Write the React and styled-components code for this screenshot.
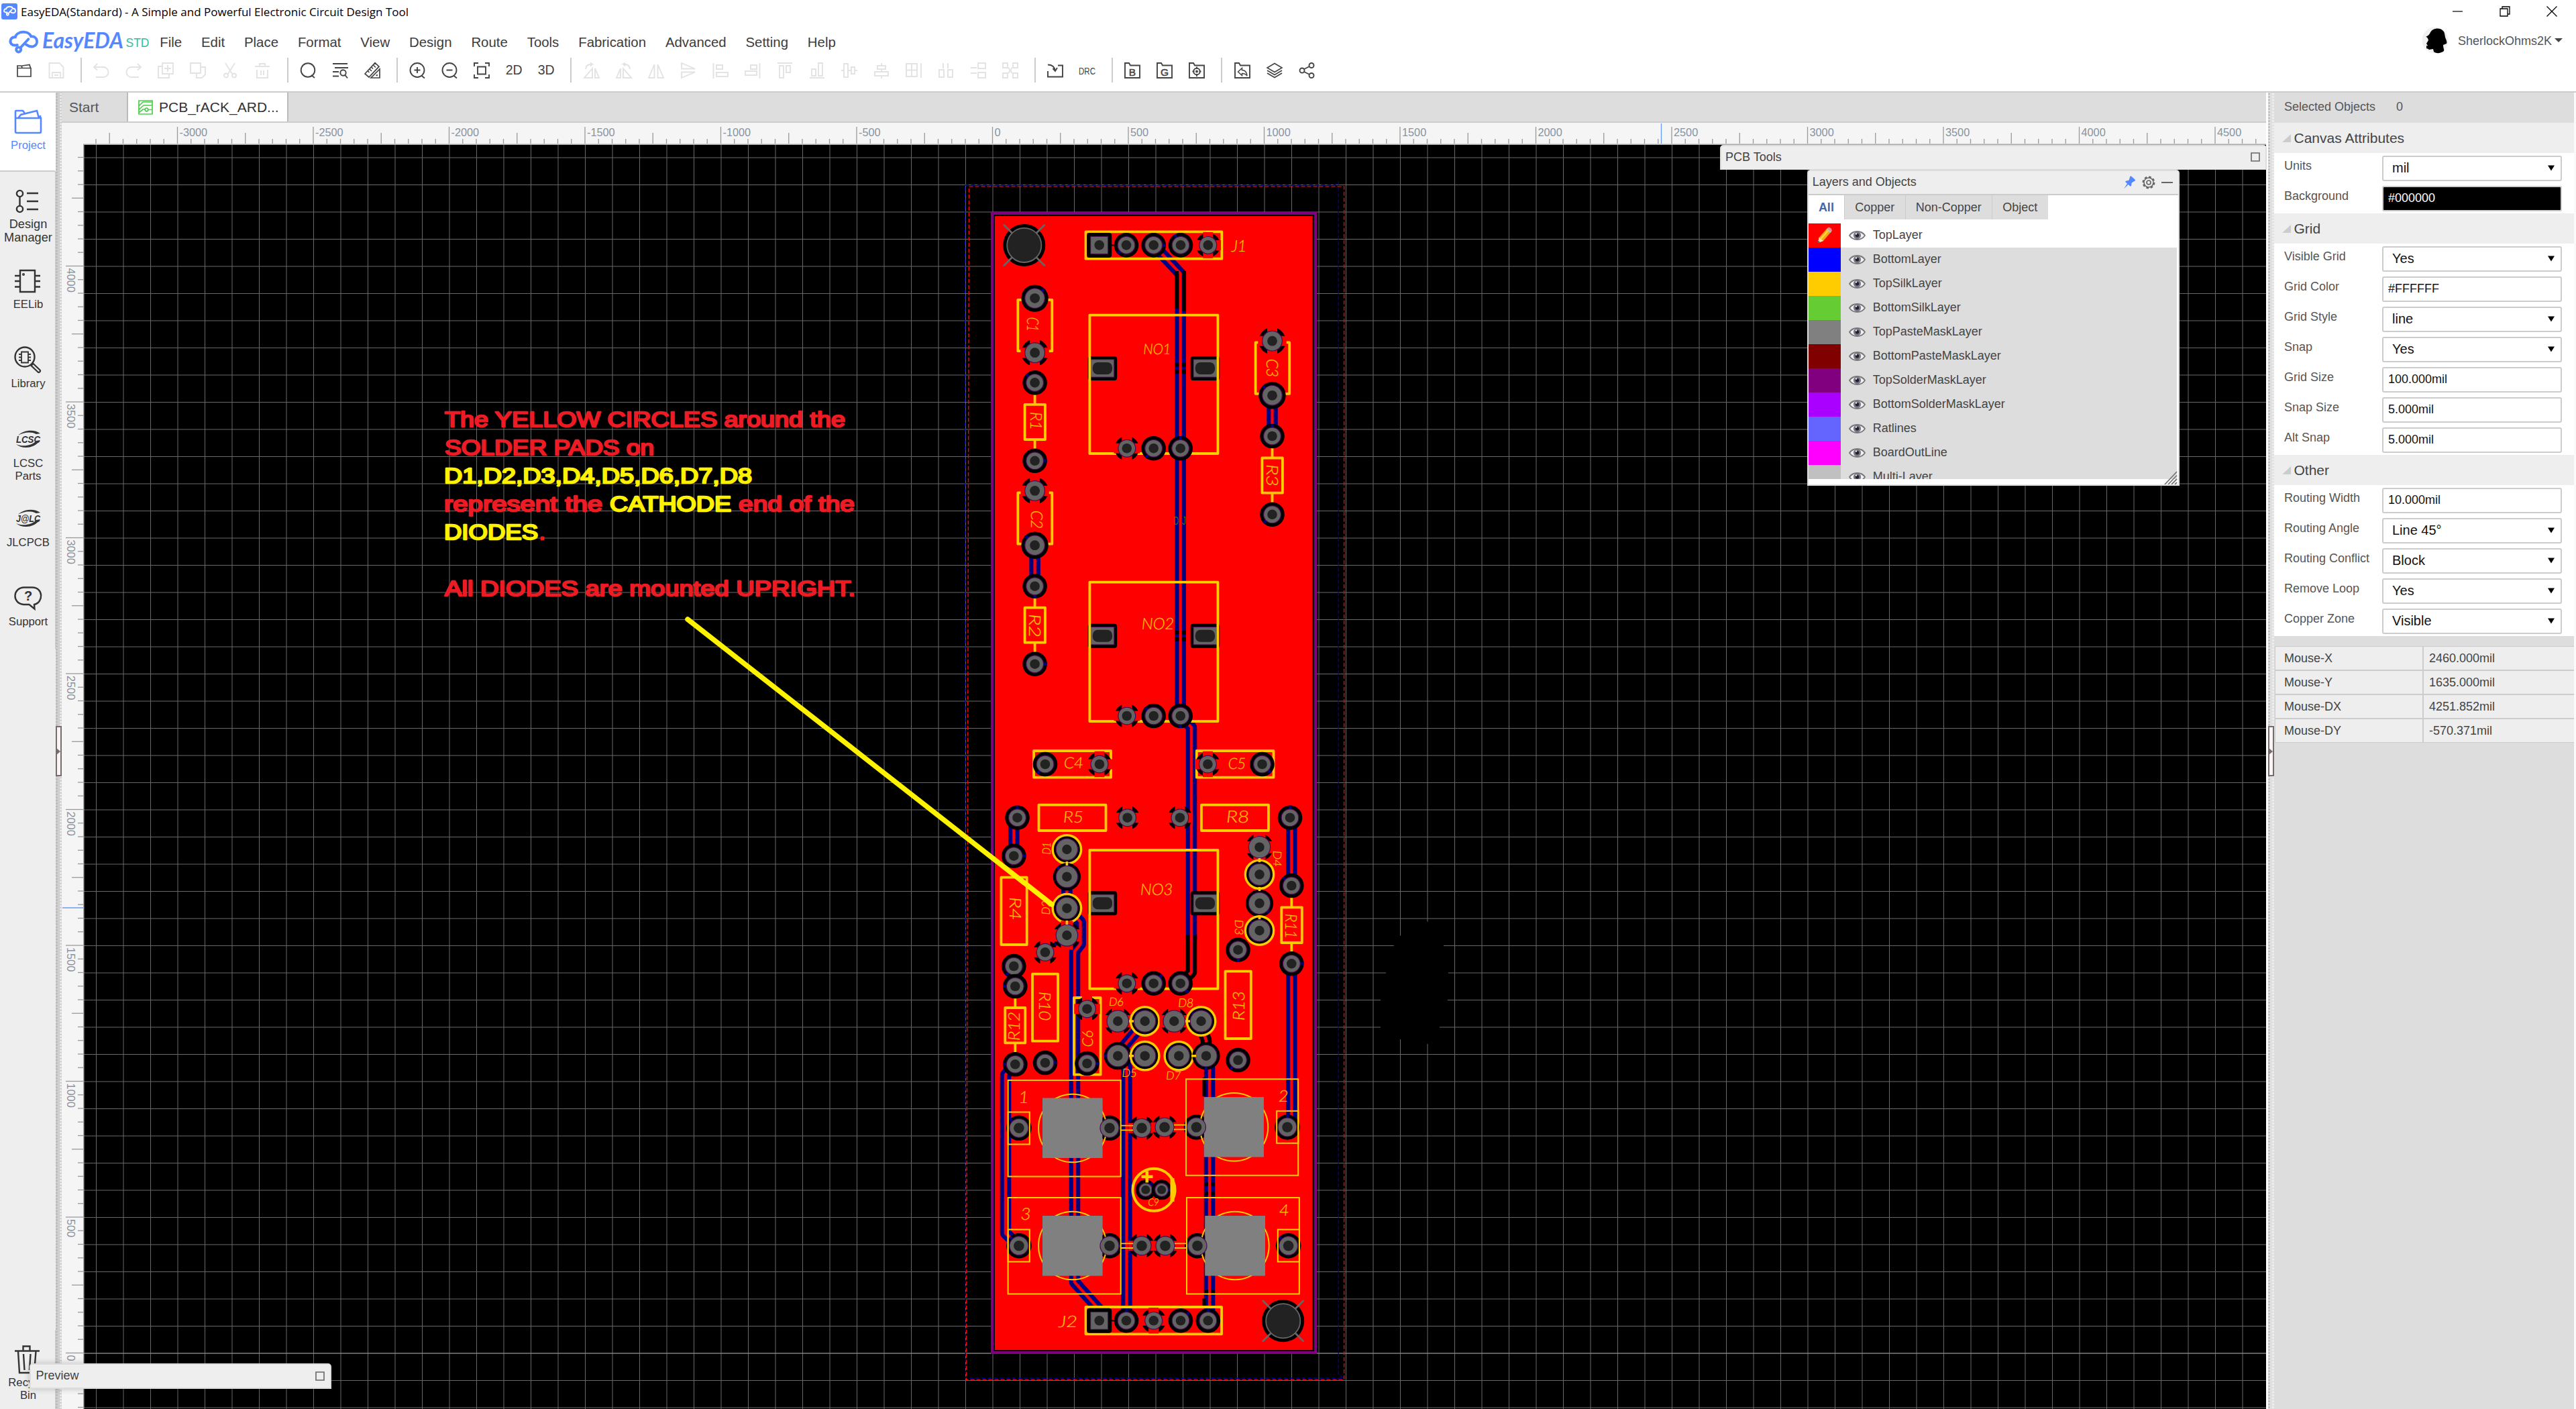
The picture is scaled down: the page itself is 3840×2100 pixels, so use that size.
import React from "react";
import styled, { createGlobalStyle, css } from "styled-components";

const Global = createGlobalStyle`
  * { box-sizing: border-box; }
  html, body { margin: 0; padding: 0; background: #fff; }
  body { font-family: "Liberation Sans", Arial, sans-serif; color: #444; overflow: hidden; }
`;

/* ---------- shell ---------- */
const App_ = styled.div`
  position: relative;
  width: 3840px;
  height: 2100px;
  display: flex;
  flex-direction: column;
  background: #fff;
  overflow: hidden;
`;
const TitleBar = styled.div`
  height: 34px;
  display: flex;
  align-items: center;
  padding-left: 2px;
  color: #000;
`;
const AppTitle = styled.span`
  margin-left: 5px;
  font-family: "Open Sans", "Noto Sans", sans-serif;
  font-size: 17px;
  letter-spacing: 0.01px;
  white-space: pre;
`;
const WindowButtons = styled.div`
  margin-left: auto;
  height: 34px;
  display: flex;
  align-items: center;
  gap: 54px;
  padding-right: 28px;
  svg { display: block; }
`;
const MenuBar = styled.div`
  height: 48px;
  padding-top: 9px;
  display: flex;
  align-items: center;
`;
const LogoSlot = styled.div`
  width: 223.8px;
  height: 39px;
  flex: none;
  svg { display: block; overflow: visible; }
`;
const MenuItem = styled.span`
  padding: 2px 14.45px 0;
  font-size: 20.4px;
  color: #3c3c3c;
`;
const User = styled.div`
  margin-left: auto;
  margin-top: -5px;
  padding-right: 20px;
  display: flex;
  align-items: center;
  font-size: 18px;
  color: #555;
  svg { display: block; }
`;
const UserName = styled.span`
  margin: 3px 4px 0 14px;
`;
const ToolBar = styled.div`
  height: 56px;
  padding: 0 0 9px 12px;
  display: flex;
  align-items: center;
  border-bottom: 2px solid #ccc;
`;
const ToolCell = styled.div`
  width: 48px;
  height: 36px;
  flex: none;
  display: flex;
  align-items: center;
  justify-content: center;
  color: ${(p) => (p.$off ? "#e3e3e3" : "#444")};
  font-size: 19.5px;
  svg { display: block; overflow: visible; }
`;
const ToolSep = styled.div`
  width: 2px;
  height: 37px;
  flex: none;
  margin: 0 5.2px 0 12.2px;
  background: #ccc;
`;
const Body = styled.div`
  flex: 1;
  min-height: 0;
  display: flex;
`;

/* ---------- left side ---------- */
const SideNav = styled.div`
  width: 83px;
  flex: none;
  background: #eee;
  display: flex;
  flex-direction: column;
`;
const NavItem = styled.div`
  height: 118.4px;
  padding: 22px 0 0 2px;
  display: flex;
  flex-direction: column;
  align-items: center;
  text-align: center;
  font-size: ${(p) => p.$fs || 16.7}px;
  line-height: 19.8px;
  color: #333;
  border-right: 1px solid #ccc;
  ${(p) => p.$bottom && css`margin-top: auto;`}
  ${(p) => p.$active && css`
    background: #fff;
    color: #5588ff;
    border-right-color: #fff;
    border-bottom: 2px solid #ccc;
  `}
`;
const NavIcon = styled.div`
  width: 44px;
  height: 44px;
  margin-bottom: 3px;
  svg { display: block; overflow: visible; }
`;
const Splitter = styled.div`
  width: 9px;
  flex: none;
  margin-left: ${(p) => p.$gap || 0}px;
  padding-top: 944px;
  background-color: ${(p) => p.$bg || "#cfcfcf"};
  background-image: radial-gradient(circle at 1.5px 2px, #b4b4b4 1px, transparent 1.4px),
    radial-gradient(circle at 7.5px 2px, #f4f4f4 1px, transparent 1.4px);
  background-size: 9px 4.5px;
`;
const Handle = styled.div`
  height: 75px;
  background: #f7f5f5;
  border: 2px solid #7a6b6b;
  display: flex;
  align-items: center;
  svg { display: block; }
`;

/* ---------- editor ---------- */
const Editor = styled.div`
  width: 3286px;
  flex: none;
  display: flex;
  flex-direction: column;
`;
const TabStrip = styled.div`
  height: 45px;
  flex: none;
  display: flex;
  background: #ddd;
  border-bottom: 2px solid #ccc;
  font-size: 21px;
`;
const StartTab = styled.div`
  width: 97px;
  padding: 1px 0 0 11px;
  display: flex;
  align-items: center;
  color: #555;
`;
const ActiveTab = styled.div`
  width: 241px;
  padding: 1px 0 0 15px;
  display: flex;
  align-items: center;
  gap: 9px;
  background: #fff;
  border: solid #bbb;
  border-width: 0 2px;
  color: #333;
`;
const Stage = styled.div`
  flex: 1;
  min-height: 0;
  svg { display: block; }
`;

/* ---------- floating windows ---------- */
const Floating = styled.div`
  position: absolute;
  left: ${(p) => p.$x}px;
  top: ${(p) => p.$y}px;
  width: ${(p) => p.$w}px;
  height: ${(p) => p.$h}px;
  display: flex;
  flex-direction: column;
  background: ${(p) => p.$bg || "#eee"};
  border: 2px solid #ddd;
  border-radius: 5px 5px 0 0;
  box-shadow: ${(p) => (p.$shadow ? "0 0 10px rgba(0,0,0,.22)" : "none")};
`;
const FloatHead = styled.div`
  height: 34px;
  flex: none;
  padding: 0 8px 1px ${(p) => p.$pad || 6}px;
  display: flex;
  align-items: center;
  background: #eee;
  font-size: 18px;
  color: #444;
  svg { display: block; }
`;
const HeadTools = styled.div`
  margin-left: auto;
  display: flex;
  align-items: center;
  gap: 9px;
`;
const LayerTabs = styled.div`
  height: 38px;
  flex: none;
  display: flex;
  border-top: 2px solid #ccc;
`;
const LayerTab = styled.div`
  padding: 0 15.2px;
  display: flex;
  align-items: center;
  font-size: 18px;
  color: #444;
  background: #ddd;
  border-right: 1.5px solid ${(p) => (p.$last ? "#ddd" : "#ccc")};
  ${(p) => p.$on && css`background: #fff; color: #4169aa; font-weight: bold;`}
`;
const LayerList = styled.div`
  height: 381px;
  margin-top: 6px;
  width: 549px;
  overflow: hidden;
`;
const LayerRow = styled.div`
  height: 36px;
  display: flex;
  align-items: center;
  background: ${(p) => (p.$on ? "#fff" : "#ddd")};
  color: #444;
  font-size: 18px;
`;
const Swatch = styled.div`
  width: 48px;
  height: 36px;
  display: flex;
  align-items: center;
  justify-content: center;
  background: ${(p) => p.$c};
`;
const EyeBox = styled.div`
  margin: 0 11px 1px 12px;
  svg { display: block; }
`;
const LayerName = styled.span`
  padding-bottom: 1px;
`;
const Grip = styled.div`
  position: absolute;
  right: 1px;
  bottom: 0;
  svg { display: block; }
`;

/* ---------- properties ---------- */
const Props = styled.div`
  width: 447px;
  flex: none;
  background: #ddd;
  display: flex;
  flex-direction: column;
`;
const Selected = styled.div`
  height: 45px;
  padding: 0 0 1.5px 15px;
  display: flex;
  align-items: center;
  gap: 31px;
  font-size: 18px;
  color: #555;
`;
const Section = styled.div`
  height: 45px;
  padding-left: 11.5px;
  display: flex;
  align-items: center;
  gap: 5px;
  background: #eee;
  font-size: 21px;
  color: #444;
`;
const Field = styled.div`
  height: 45px;
  padding: 4px 0 0 15px;
  display: flex;
  background: #fff;
`;
const FieldLabel = styled.div`
  width: 146px;
  font-size: 18px;
  line-height: 31px;
  color: #555;
`;
const Input = styled.div`
  width: 268px;
  height: 38px;
  padding: 0 9px ${(p) => (p.$select ? 1 : 2)}px ${(p) => (p.$select ? 13 : 7)}px;
  display: flex;
  align-items: center;
  justify-content: space-between;
  border: 2px solid #ccc;
  border-radius: 3px;
  font-size: ${(p) => (p.$select ? 20 : 18)}px;
  color: ${(p) => (p.$dark ? "#fff" : "#111")};
  background: ${(p) => (p.$dark ? "#000" : "#fff")};
  svg { display: block; }
`;
const MouseTable = styled.div`
  margin-top: 15px;
  padding-left: 1px;
  font-size: 18px;
  color: #444;
`;
const MouseRow = styled.div`
  height: 36px;
  display: flex;
  line-height: 35px;
  background: #eee;
  border: solid #ccc;
  border-width: 1px 0 1px 1px;
`;
const MouseKey = styled.div`
  width: 221px;
  padding-left: 13px;
  border-right: 2px solid #ccc;
`;
const MouseValue = styled.div`
  padding-left: 8px;
`;
const Edge = styled.div`
  flex: 1;
  background: #fafafa;
`;

/* ---------- toolbar icons ---------- */
const I = ({ children, s = 24, w = 1.9 }) => (
  <svg width={s} height={s} viewBox="0 0 24 24" fill="none" stroke="currentColor" strokeWidth={w}>{children}</svg>
);
const P = ({ d, ...r }) => <I {...r}><path d={d} /></I>;
const boxFolder = "M1 23V1h6l2 3.5h14V23z";
const Letter = ({ c }) => (
  <I><path d={boxFolder} /><text x="12" y="19.5" fontSize="15.5" textAnchor="middle" fill="currentColor" strokeWidth=".5" fontFamily="Liberation Sans, sans-serif">{c}</text></I>
);
const Drc = () => (
  <svg width="25" height="14" viewBox="0 0 25 14">
    <text x="0" y="12.500" fontSize="15.500" fill="currentColor" textLength="25" lengthAdjust="spacingAndGlyphs" fontFamily="Liberation Sans, sans-serif">DRC</text>
  </svg>
);

const tools = [
  [<P d="M2 8.500h20V21H2zM2 8.500V5h6l1 3M9 5l11-1.500 1.500 5" w={1.7} />],
  [<P d="M1.500 1h15l6 6v16h-21zM6 23v-8h12v8M9 19h6" />, 1],
  0,
  [<P d="M6 2 1 7l5 4.500M1 7h14a7.500 7.500 0 0 1 0 15H4" />, 1],
  [<P d="m18 2 5 5-5 4.500M23 7H9a7.500 7.500 0 0 0 0 15h11" />, 1],
  [<P d="M7 1h16v16H7zM7 6H1v17h16v-6M15 4v10M10 9h10" />, 1],
  [<P d="M1 1h15v15H1zM16 7h7v11l-5 5h-8v-7" />, 1],
  [<P d="m5 1 10 16M19 1 9 17M9 19.500a3 3 0 1 1-6 0 3 3 0 0 1 6 0zM21 19.500a3 3 0 1 1-6 0 3 3 0 0 1 6 0z" />, 1],
  [<P d="M1 6h22M8 6V2h8v4M4 11v12h16V11M10 12v7M14 12v7" />, 1],
  0,
  [<I><circle cx="12" cy="11.500" r="10.300" /><path d="m17 19 5 4" /></I>],
  [<I><path d="M1 2h22M4 8h20M1 14h9M1 20.500h9" /><circle cx="16.500" cy="15.500" r="4.200" /><path d="m19.500 19 3.500 4.500" /></I>],
  [<I w={1.7}><path d="M1 17 16 .8l6 5.400L7 22zM23 10v13H10zM19 18v1.500h-1.500M5.500 13l2 2M8 10l3 3M11 7.500l2 2M14 4.500l3 3" /></I>],
  0,
  [<I><circle cx="12" cy="11.500" r="10.500" /><path d="m18 19.500 5 4M7.500 11.500h9M12 7v9" /></I>],
  [<I><circle cx="12" cy="11.500" r="10.500" /><path d="m18 19.500 5 4M7.500 11.500h9" /></I>],
  [<P d="M7 1H1v5M17 1h6v5M7 23H1v-5M17 23h6v-5M6 6.500h12v11H6z" />],
  ["2D"],
  ["3D"],
  0,
  [<P d="M13 9v14H1zM17 9v14h6zM3 10C3 5 7 2.500 13 2.500L10 .5M13 2.500l-3 3" />, 1],
  [<P d="M11 9v14h12zM7 9v14H1zM21 10c0-5-4-7.500-10-7.500L14 .5m-3 2 3 3" />, 1],
  [<P d="M9.500 3v20H1zM14.500 3v20H23z" />, 1],
  [<P d="M2 9.500V1l20 8.500zM2 14.500V23l20-8.500z" />, 1],
  [<P d="M1.500 1v23M6 4h9v6H6zM6 15h17v6H6z" />, 1],
  [<P d="M22.500 1v23M9 4h9v6H9zM1 13h17v6H1z" />, 1],
  [<P d="M1 1h22M4 5h6v18H4zM14 5h6v10h-6z" />, 1],
  [<P d="M1 23h22M4 10h6v10H4zM14 1h6v19h-6z" />, 1],
  [<P d="M4 2h6v20H4zM15 7h5v10h-5zM0 12h4M10 12h5M20 12h4" />, 1],
  [<P d="M6 5h12v5H6zM2 14h20v6H2zM12 1v4M12 10v4M12 20v4" />, 1],
  [<P d="M1 2h16v19H1zM1 11.500h16M9 2v19M23 1v22" />, 1],
  [<P d="M2 11h7v11H2zM15 11h7v11h-7zM8 1v8M15 1v8" />, 1],
  [<P d="M12 1h11v8H12zM12 15h11v8H12zM1 8h9M1 16h9" />, 1],
  [<P d="M1 1h7v7H1zM16 1h7v7h-7zM1 16h7v7H1zM16 16h7v7h-7zM9 8c3 2 3 6 0 8M15 8c-3 2-3 6 0 8" />, 1],
  0,
  [<P d="M1 13v8.500h22V4.500h-7M1 3.500c6 0 10 3 11 9M8.500 9l3.500 4 3-5" />],
  [<Drc />],
  0,
  [<Letter c="B" />],
  [<Letter c="G" />],
  [<I><path d={boxFolder} /><circle cx="12" cy="13.500" r="4.800" /><circle cx="12" cy="13.500" r="1" /><path d="M12 6.500v3M12 17.500v3.500M5.500 13.500h3M15.500 13.500h3" /></I>],
  0,
  [<I><path d={boxFolder} /><path d="m5.500 14 6-5.500v3c5 0 7 3.500 7.500 8.500-2-3-4-3.500-7.500-3.500v3z" strokeWidth="1.500" /></I>],
  [<P d="m12 1.500 11 6.500-11 6.500L1 8zM1 12l11 6.500L23 12M1 16l11 6.500L23 16" w={1.6} />],
  [<I><circle cx="19" cy="4.500" r="3.500" /><circle cx="5" cy="12" r="3.500" /><circle cx="19" cy="19.500" r="3.500" /><path d="m8 10 8-4M8 14l8 4" /></I>],
];

/* ---------- side icons ---------- */
const SI = ({ children, w = 2.4 }) => (
  <svg width="44" height="44" viewBox="0 0 44 44" fill="none" stroke="currentColor" strokeWidth={w}>{children}</svg>
);
const Swoosh = ({ t }) => (
  <SI w={0}>
    <path d="M7 15C14 7 31 5 40 12l-6 1C27 9 15 10 7 15zM4 28c8 7 26 8 36-6l-6 1C27 31 13 32 4 28z" fill="#333" />
    <text x="22" y="25.500" textAnchor="middle" fontSize="14.500" fontWeight="bold" fontStyle="italic" fill="#333" textLength="36" lengthAdjust="spacingAndGlyphs" fontFamily="Liberation Sans, sans-serif">{t}</text>
  </SI>
);
const nav = [
  { l: ["Project"], active: 1, i: <SI><path d="M3 16h38v20q0 2-2 2H5q-2 0-2-2zM3 16V6q0-1 1-1h10l3 4M7 16l4-5 24-6 3 11M40 16v-4" strokeWidth="2.600" /></SI> },
  { l: ["Design", "Manager"], fs: 18.2, i: <SI><circle cx="9.500" cy="10.500" r="4.600" /><circle cx="9.500" cy="33.500" r="4.600" /><path d="M9.500 15v14M20 10h17M20 22h17M20 34h17" /></SI> },
  { l: ["EELib"], i: <SI><path d="M10 6h22v32H10zM2 14h8M2 22h8M2 30.500h8M32 14h8M32 22h8M32 30.500h8" /><circle cx="15" cy="12" r=".8" /></SI> },
  { l: ["Library"], i: <SI><circle cx="17" cy="17" r="14.500" /><path d="M12 9.500h10v16H12zM8 13h4M8 17.500h4M8 22h4M22 13h4M22 17.500h4M22 22h4" strokeWidth="1.800" /><path d="m26.500 30 3-3 10 9.500c1.500 2-1 4.500-3 3z" strokeWidth="2.200" /></SI> },
  { l: ["LCSC", "Parts"], i: <Swoosh t="LCSC" /> },
  { l: ["JLCPCB"], i: <Swoosh t="J@LC" /> },
  { l: ["Support"], i: <SI><path d="M16 5.500h12c17 0 17 22.500 3 25.500l.5 6.500-8-6.500h-8C-2 30-2 6 16 5.500z" /><text x="22" y="25" textAnchor="middle" fontSize="20" fontWeight="bold" strokeWidth="0" fill="#333" fontFamily="Liberation Sans, sans-serif">?</text></SI> },
];

/* ---------- small drawings ---------- */
const Cloud = ({ x = 0, y = 0, k = 1, c = "#5588ff", w = 4.6 }) => (
  <g transform={`translate(${x} ${y}) scale(${k})`} fill="none" stroke={c} strokeWidth={w} strokeLinecap="round">
    <path d="M13 22C5 24 1 19 3 14c1-3 4-4 7-4C12 1 30-1 34 9c10-1 12 12 4 15-5 2-9-1-12-3" />
    <path d="m30 13-12 13" /><circle cx="15" cy="29" r="3.600" />
  </g>
);
const Logo = () => (
  <svg width="223" height="39" viewBox="0 43 223 39">
    <Cloud x={13} y={45.500} k={0.98} w={4} />
    <text x="63" y="71.500" fontSize="32" fontWeight="bold" fontStyle="italic" fill="#5588ff" textLength="121" lengthAdjust="spacingAndGlyphs" fontFamily="Lato, Liberation Sans, sans-serif">EasyEDA</text>
    <text x="187.500" y="70" fontSize="17.500" fill="#2fc09a" fontFamily="Liberation Sans, sans-serif">STD</text>
  </svg>
);
const Arrow = () => <svg width="10" height="9" viewBox="0 0 10 9"><path d="M0 .5h10L5 8.500z" fill="#000" /></svg>;
const Eye = () => (
  <svg width="25" height="16" viewBox="0 0 25 16">
    <path d="M1 8C6 0 19 0 24 8 19 16 6 16 1 8z" fill="#f2f2f2" stroke="#777" strokeWidth="1.800" />
    <circle cx="12.500" cy="7.800" r="5.600" fill="#777787" /><circle cx="12.500" cy="7.800" r="2.800" fill="#22222c" /><circle cx="11" cy="5.500" r="1.200" fill="#eee" />
  </svg>
);
const Pencil = () => (
  <svg width="26" height="26" viewBox="0 0 26 26">
    <path d="M3 24 4.500 16 17 2l6 5-12 14z" fill="#f0a818" /><path d="m17 2 2-1.500q4 1 5 5L22.500 8z" fill="#e88a8a" />
    <path d="m15.500 4 6 5 1.500-1.500-6-5z" fill="#bbb" /><path d="M3 24 4.500 16l6.500 5z" fill="#f5e0b8" /><path d="m3 24 .6-3 2.200 1.700z" fill="#333" /><path d="m6 17.500 11-12.500 2 1.700-11 12.500z" fill="#ffd23a" />
  </svg>
);
const MaxBox = () => <svg width="14" height="14" viewBox="0 0 14 14"><path d="M1 1h12v12H1z" fill="none" stroke="#666" strokeWidth="1.600" /></svg>;

/* ---------- board drawing ---------- */
const G = 40.5;
const X0 = 1480;
const Y0 = 2017;
const range = (a, b) => Array.from({ length: b - a + 1 }, (_, i) => a + i);
const SILK = "#ffcc00";

const Grid = () => (
  <g>
    <g stroke="#686868" strokeWidth="1">
      {range(-33, 46).map((n) => <line key={"v" + n} x1={X0 + n * G} x2={X0 + n * G} y1="216" y2="2100" />)}
      {range(-2, 44).map((n) => <line key={"h" + n} y1={Y0 - n * G} y2={Y0 - n * G} x1="125" x2="3378" />)}
      <line x1="125" x2="3378" y1={Y0} y2={Y0} stroke="#8a8a8a" />
    </g>
    <path d="M2087 1395 2112 1370 2124 1370 2140 1385 2152 1409 2159 1450 2158 1490 2146 1531 2129 1556 2087 1549 2058 1532 2058 1490 2066 1450 2078 1409z" fill="#000" />
  </g>
);

const Rulers = () => (
  <g fontFamily="Liberation Sans, sans-serif" fontSize="16.300" fill="#8793a1">
    <rect x="92" y="183" width="3286" height="32.500" fill="#f5f5f5" />
    <rect x="92" y="183" width="33" height="1917" fill="#f5f5f5" />
    <rect x="124" y="214.500" width="3254" height="1.500" fill="#a8a8a8" />
    <rect x="124" y="215" width="1.500" height="1885" fill="#a8a8a8" />
    {range(-66, 93).map((n) => {
      const x = X0 - 0.5 + (n * G) / 2;
      const t = n % 10 === 0 ? 189 : n % 5 === 0 ? 198 : 207;
      return (
        <g key={n}>
          <line x1={x} x2={x} y1={t} y2="214" stroke="#999" strokeWidth="1.300" />
          {n % 10 === 0 && <text x={x + 3} y="202.500">{n * 50}</text>}
        </g>
      );
    })}
    {range(-4, 88).map((n) => {
      const y = Y0 - 0.5 - (n * G) / 2;
      const t = n % 10 === 0 ? 98 : n % 5 === 0 ? 107 : 116;
      return (
        <g key={n}>
          <line y1={y} y2={y} x1={t} x2="124" stroke="#999" strokeWidth="1.300" />
          {n % 10 === 0 && <text transform={`translate(100 ${y + 3}) rotate(90)`}>{n * 50}</text>}
        </g>
      );
    })}
    <path d="M2476.500 184V214M93 1353H124" stroke="#6a9cf0" strokeWidth="1.300" />
  </g>
);

const Track = ({ d, c = "#000082" }) => (
  <g fill="none" strokeLinejoin="round">
    <path d={d} stroke={c} strokeWidth="16.500" />
    <path d={d} stroke="#5a0060" strokeWidth="5.400" />
    <path d={d} stroke="#ff0000" strokeWidth="3.800" />
  </g>
);

const Pad = ({ x, y, k, big = 12.9, out = 18.3, hole = 7.3, a = 225 }) => {
  const rad = (a * Math.PI) / 180;
  const c = Math.cos(rad);
  const s = Math.sin(rad);
  return (
    <g>
      <circle cx={x} cy={y} r={out} fill="#000" />
      {k !== "t" && <line x1={x + c * big} y1={y + s * big} x2={x + c * out * 0.98} y2={y + s * out * 0.98} stroke="#000082" strokeWidth="4" />}
      {k === "t" && <path d={`M${x - out - 1} ${y}H${x + out + 1}M${x} ${y - out - 1}V${y + out + 1}`} stroke="#ff0000" strokeWidth={big > 15 ? 18 : 15} />}
      {k === "y" && <circle cx={x} cy={y} r="21.200" fill="none" stroke={SILK} strokeWidth="3.400" />}
      <circle cx={x} cy={y} r={big} fill="#646464" stroke="#4a0a52" strokeWidth="1.200" />
      <circle cx={x} cy={y} r={hole} fill="#222" />
    </g>
  );
};
const L = { big: 14.8, out: 20.2, hole: 7.4 };
const D = { big: 16.2, out: 20.6, hole: 7.2 };
const B = { big: 14, out: 18.8, hole: 7.8 };
const S = { big: 10, out: 15, hole: 6.5 };

const pads = [
  [1679, 365.4, "r", {}, 135], [1719.7, 365.4, "r", {}, 0], [1760, 365.4, "r", {}, 240], [1800.8, 365.4, "t"],
  [1542.6, 444.6, "r", L, 315], [1542.6, 525.7, "t", L], [1542.6, 570.4, "r"], [1542.6, 686.8, "r", {}, 0],
  [1542.6, 731.4, "t", L], [1542.6, 812.7, "r", L], [1542.6, 873.7, "r", {}, 90], [1542.6, 989.7, "r", {}, 0],
  [1896.5, 508.2, "t", L], [1896.5, 589.3, "r", L], [1896.5, 650, "r", {}, 270], [1896.5, 766.8, "r", {}, 135],
  [1679.8, 668.2, "t"], [1719.7, 668.2, "r", {}, 130], [1759.7, 668.2, "r", {}, 270],
  [1679.8, 1067, "t"], [1719.7, 1067, "r"], [1759.7, 1067, "r", {}, 90],
  [1679.8, 1465.7, "t"], [1719.7, 1465.7, "r", {}, 315], [1759.7, 1465.7, "r", {}, 50],
  [1558, 1139, "r", {}, 130], [1639, 1139, "t"], [1800.4, 1139, "t"], [1881.5, 1139, "r", {}, 45],
  [1516.5, 1218.7, "r", {}, 270], [1680.6, 1218.7, "t"], [1758.9, 1218.7, "t"], [1923, 1218.7, "r", {}, 270],
  [1511.3, 1275.7, "r", {}, 0],
  [1590.4, 1266, "y", D], [1590.4, 1306.7, "r", D], [1590.4, 1353.7, "y", D], [1590.4, 1394, "t", D], [1558, 1419.3, "t"],
  [1877.5, 1262.7, "t", D], [1877.5, 1303.3, "y", D], [1877.5, 1346.3, "r", D, 45], [1877.5, 1387, "y", D],
  [1925.3, 1320, "r"], [1925.3, 1436.3, "r", {}, 0], [1845.5, 1415.7, "r", {}, 90], [1845.5, 1580, "r", {}, 130],
  [1511.3, 1440, "r", {}, 130], [1513.3, 1470, "r", {}, 180], [1513.3, 1586.3, "r", {}, 180], [1558, 1584, "r", {}, 0],
  [1620.5, 1503.7, "t"], [1620.5, 1585, "r", {}, 0],
  [1666.3, 1522, "t", D], [1706.7, 1522, "y", D], [1750.2, 1522, "t", D], [1790.5, 1522, "y", D],
  [1666.3, 1573.7, "r", D, 180], [1706.7, 1573.7, "y", D], [1757.3, 1573.7, "y", D], [1798, 1573.7, "r", D, 90],
  [1679, 1968.3, "r", {}, 270], [1719.7, 1968.3, "t"], [1760, 1968.3, "r", {}, 315], [1800.8, 1968.3, "r", {}, 270],
];
const topPads = [
  [1518.9, 1681.3, "r", B], [1654, 1681.3, "r", B, 0], [1702, 1681.3, "t", B], [1736, 1680, "t", B], [1783.4, 1680, "r", B, 180], [1919, 1680, "r", B, 270],
  [1518.9, 1856.7, "r", B], [1654, 1856.7, "r", B, 0], [1702, 1856.7, "t", B], [1737, 1856.7, "t", B], [1785, 1856.7, "r", B, 180], [1920.6, 1856.7, "r", B],
  [1707.8, 1773.3, "r", S, 315], [1731.6, 1773.3, "r", S, 0],
];
const padOf = ([x, y, k, o = {}, a = 225], i) => <Pad key={i} x={x} y={y} k={k} a={a} {...o} />;

const T = ({ x, y, r = 0, s = 22, w, children }) => (
  <text transform={`translate(${x} ${y}) rotate(${r}) skewX(-6)`} fontFamily="Lato, Open Sans, sans-serif" fontWeight="300" fontSize={s} fill="#ffc400" stroke="#ffc400" strokeWidth=".25" textLength={w} lengthAdjust="spacingAndGlyphs">{children}</text>
);

const Slot = ({ x, y }) => (
  <g>
    <rect x={x - 21.700} y={y - 18} width="43.500" height="36" rx="4" fill="#000" />
    <rect x={x - 17.400} y={y - 13.200} width="34.800" height="26.400" fill="#646464" stroke="#4a0a52" />
    <rect x={x - 14.600} y={y - 9} width="29.200" height="18" rx="7.500" fill="#222" />
  </g>
);
const SquarePad = ({ x, y }) => (
  <g>
    <rect x={x - 18.500} y={y - 18.500} width="37" height="37" rx="4" fill="#000" />
    <rect x={x - 13} y={y - 13} width="26" height="26" fill="#646464" stroke="#4a0a52" />
    <circle cx={x} cy={y} r="7.300" fill="#222" />
  </g>
);
const Mount = ({ x, y }) => (
  <g>
    <circle cx={x} cy={y} r="31.500" fill="#000" />
    <path d={`M${x - 30} ${y - 30}l60 60M${x + 30} ${y - 30}l-60 60`} stroke="#666" strokeWidth="2.800" strokeLinecap="round" />
    <circle cx={x} cy={y} r="25.600" fill="#222" stroke="#666" strokeWidth="1.800" />
  </g>
);
const Key = ({ x, y, cx, x2, hs }) => (
  <g fill="none" stroke={SILK} strokeWidth="2">
    <rect x={x} y={y} width={x2 - x} height="143.500" />
    <circle cx={cx} cy={y + 71.500} r="50.700" />
    <rect x={hs} y={y + 47.500} width="32.200" height="48" />
  </g>
);

const Board = () => (
  <g>
    <rect x="1479" y="318" width="482" height="1698" fill="#000" stroke="#800080" strokeWidth="4" />
    <rect x="1483" y="322.100" width="473.600" height="1690" fill="#ff0000" />
    <g fill="none" strokeWidth="1.400">
      <path d="M1438.600 276H1990L1995.300 271V2049L2003 2054.300H1439.400z" stroke="#00009a" strokeDasharray="5.500 3.500" />
      <path d="M1444.500 277.900H2003.600V2056.700H1440.500z" stroke="#ff0000" strokeDasharray="6 3" />
    </g>

    <Track d="M1719.700 365.400 1759.700 408V668" />
    <path d="M1754.300 404V460M1765.300 404V464" stroke="#000" strokeWidth="5.600" />
    <Track d="M1759.700 668V1067L1776 1084V1218" />
    <Track d="M1776 1218V1400" />
    <Track d="M1776 1393V1449L1760 1466" c="#000" />
    <path d="M1751.500 541h5.800v5.500h-5.800zM1762 541h6v5.500h-6zM1751.500 551h5.800v5.700h-5.800zM1762 551h6v5.700h-6zM1751.500 940h5.800v5.500h-5.800zM1762 940h6v5.500h-6zM1751.500 950h5.800v5.700h-5.800zM1762 950h6v5.700h-6z" fill="#000" />
    <g fontFamily="Liberation Sans, sans-serif" fontSize="16" fill="#2f7a1e">
      <text x="1750" y="782" textLength="7" lengthAdjust="spacingAndGlyphs">D</text>
      <text x="1762" y="782" textLength="6" lengthAdjust="spacingAndGlyphs">J</text>
    </g>
    <Track d="M1542.600 812V873" />
    <Track d="M1896.500 589V650" />
    <Track d="M1511.300 1219V1276" />
    <Track d="M1925.300 1219V1320" />
    <Track d="M1925.300 1436V1670L1919 1680" />
    <Track d="M1590.400 1306V1353L1610.600 1374V1407L1602 1418V1911L1638.700 1952V1968" />
    <path d="M1558 1419 1590 1394" stroke="#000082" strokeWidth="6" />
    <Track d="M1706.700 1522 1666.300 1570 1679.400 1590V1968" />
    <Track d="M1790.500 1530 1798 1550V1574" c="#000" />
    <Track d="M1798 1574 1803 1592V1968" />
    <path d="M1795 1606V1634M1795 1765h6M1805 1765h6M1795 1779h6M1805 1779h6M1795 1925h6M1805 1925h6M1795 1935v12" stroke="#000" strokeWidth="5" />
    <Track d="M1513 1586 1499 1602V1838L1519 1857" />

    <g fill="#808080">
      <rect x="1554" y="1636.700" width="89.400" height="89" /><rect x="1794.800" y="1635.300" width="89" height="89" />
      <rect x="1554" y="1812" width="89.400" height="89.300" /><rect x="1796.400" y="1812" width="89.400" height="89.300" />
    </g>

    <Slot x={1643.4} y={548.9} /><Slot x={1796.4} y={548.9} />
    <Slot x={1643.4} y={947.7} /><Slot x={1796.4} y={947.7} />
    <Slot x={1643.4} y={1346.3} /><Slot x={1796.4} y={1346.3} />

    <g fill="none" stroke={SILK} strokeWidth="3.800" strokeLinejoin="round">
      <rect x="1618.500" y="345.400" width="202.800" height="40.300" />
      <rect x="1618.500" y="1948" width="202.500" height="40.300" />
      <rect x="1624.400" y="469.600" width="191" height="206.400" />
      <rect x="1624.400" y="867.700" width="191" height="207.300" />
      <rect x="1624.400" y="1267" width="191" height="206.700" />
      <path d="M1526.800 446.800H1517.300V523.200H1526.800M1559.200 446.800H1568.300V523.200H1559.200" />
      <path d="M1526.800 734.300H1517.300V810.700H1526.800M1559.200 734.300H1568.300V810.700H1559.200" />
      <path d="M1880.300 510.400H1871.600V586.800H1880.300M1913 510.400H1922.200V586.800H1913" />
      <path d="M1527.600 602.900H1558V655H1527.600zM1542.600 588V603M1542.600 655V669" />
      <path d="M1527.600 905.700H1558V957.700H1527.600zM1542.600 891V906M1542.600 958V972" />
      <path d="M1881.400 682.500H1911.900V734.600H1881.400zM1896.500 668V682M1896.500 735V749" />
      <rect x="1541" y="1119" width="115" height="39.700" /><rect x="1783.800" y="1119" width="114.700" height="39.700" />
      <rect x="1548.500" y="1199.700" width="100" height="38.300" /><rect x="1790.900" y="1199.700" width="100" height="38.300" />
      <rect x="1492.400" y="1307.700" width="38.300" height="100.300" />
      <rect x="1539" y="1451.700" width="38" height="100" />
      <rect x="1826.500" y="1447.700" width="38.300" height="100.300" />
      <path d="M1910.300 1352.300H1940.800V1405H1910.300zM1925.300 1338V1352M1925.300 1405V1418.500" />
      <path d="M1498.300 1502H1528.300V1554.300H1498.300zM1513.300 1487V1502M1513.300 1554V1568" />
      <rect x="1601" y="1487" width="39.600" height="114.700" />
    </g>
    <g>{pads.map(padOf)}</g>
    <path d="M1590.400 1284v6M1590.400 1372v6M1877.500 1279v6M1877.500 1322v6M1877.500 1364v6M1683 1522h7M1767 1522h7M1683 1573.700h7M1776 1573.700h7" stroke={SILK} strokeWidth="3.600" />
    <SquarePad x={1638.7} y={365.4} /><SquarePad x={1638.7} y={1968.3} />
    <path d="M1656 365.400h8M1656 1968.300h8" stroke="#000" strokeWidth="2" />

    <g>{topPads.map(padOf)}</g>
    <Key x={1502.6} x2={1670.7} y={1610} cx={1598.7} hs={1502.6} />
    <Key x={1768} x2={1935.2} y={1608.3} cx={1839.5} hs={1903.2} />
    <Key x={1502.6} x2={1670.7} y={1785} cx={1598.7} hs={1502.6} />
    <Key x={1769} x2={1936.8} y={1785} cx={1841} hs={1904.8} />
    <g fill="#808080">
      <rect x="1554" y="1636.700" width="89.400" height="89" /><rect x="1794.800" y="1635.300" width="89" height="89" />
      <rect x="1554" y="1812" width="89.400" height="89.300" /><rect x="1796.400" y="1812" width="89.400" height="89.300" />
    </g>
    <g>{topPads.slice(0, 12).filter((p) => [1654, 1783.4, 1785].includes(p[0])).map(([x, y], i) => (
      <g key={i}><circle cx={x} cy={y} r="14" fill="#646464" stroke="#4a0a52" strokeWidth="1.200" /><circle cx={x} cy={y} r="7.800" fill="#222" /></g>
    ))}</g>
    <path d="M1671 1677.700h18M1671 1684.300h18M1750 1676.700h18M1750 1683.300h18M1671 1853.300h18M1671 1860h18M1751 1853.300h18M1751 1860h18" stroke={SILK} strokeWidth="1.800" />
    <g fill="none" stroke={SILK}>
      <circle cx="1720" cy="1773.300" r="31.500" strokeWidth="4" />
      <path d="M1747.500 1756V1791" strokeWidth="6" /><path d="M1701.500 1753.700h17M1709.800 1745.500v17" strokeWidth="4.600" />
    </g>
    <Mount x={1526.8} y={365.4} /><Mount x={1912.7} y={1968.7} />

    <T x={1835} y={375} w={22} s={24}>J1</T><T x={1577} y={1977.700} w={28} s={24}>J2</T>
    <T x={1703.500} y={528} w={41} s={22}>NO1</T><T x={1701} y={937.500} w={48} s={24}>NO2</T><T x={1699} y={1334} w={48} s={24}>NO3</T>
    <T x={1531} y={472} r={90} w={21} s={24}>C1</T><T x={1536} y={613} r={90} w={27} s={24}>R1</T>
    <T x={1537} y={760} r={90} w={27} s={24}>C2</T><T x={1534} y={914} r={90} w={35} s={24}>R2</T>
    <T x={1888} y={534} r={90} w={27} s={24}>C3</T><T x={1888} y={691} r={90} w={33} s={24}>R3</T>
    <T x={1585} y={1144.500} w={29} s={23}>C4</T><T x={1830} y={1146} w={26} s={23}>C5</T>
    <T x={1584} y={1225.500} w={30} s={24}>R5</T><T x={1827} y={1226} w={34} s={25}>R8</T>
    <T x={1505} y={1336} r={90} w={34} s={24}>R4</T><T x={1549} y={1477} r={90} w={43} s={24}>R10</T>
    <T x={1916} y={1361} r={90} w={37} s={24}>R11</T><T x={1520} y={1552} r={-90} w={43} s={24}>R12</T>
    <T x={1855} y={1522} r={-90} w={44} s={24}>R13</T><T x={1629} y={1561} r={-90} w={25} s={22}>C6</T>
    <T x={1565.500} y={1274} r={-90} w={18} s={17}>D1</T><T x={1565} y={1364} r={-90} w={21} s={17}>D2</T>
    <T x={1841} y={1370} r={90} w={23} s={17}>D3</T><T x={1898} y={1267} r={90} w={24} s={17}>D4</T>
    <T x={1672} y={1604.500} w={22} s={17}>D5</T><T x={1652.500} y={1499} w={22} s={17}>D6</T>
    <T x={1737.500} y={1608.500} w={22} s={17}>D7</T><T x={1755.500} y={1501} w={23} s={18}>D8</T>
    <T x={1518} y={1643.500} s={25}>1</T><T x={1905.500} y={1641.500} s={24}>2</T>
    <T x={1521} y={1817.500} s={25}>3</T><T x={1906.500} y={1812} s={24}>4</T>
    <T x={1711} y={1797} w={16} s={15}>C9</T>
  </g>
);

const RED = "#ed1c24";
const YEL = "#fff200";
const Note = ({ x, y, w, c = RED, children }) => (
  <text x={x} y={y} textLength={w} lengthAdjust="spacingAndGlyphs" fill={c} stroke={c}>{children}</text>
);
const Notes = () => (
  <g>
    <g transform="translate(0 1)" fontFamily="Liberation Sans, sans-serif" fontSize="32" strokeWidth="2.400" strokeLinejoin="round">
      <Note x={663} y={635} w={597}>The YELLOW CIRCLES around the</Note>
      <Note x={663} y={677} w={312}>SOLDER PADS on</Note>
      <Note x={662} y={719} w={459} c={YEL}>D1,D2,D3,D4,D5,D6,D7,D8</Note>
      <Note x={662} y={761} w={236}>represent the</Note>
      <Note x={909} y={761} w={181} c={YEL}>CATHODE</Note>
      <Note x={1101} y={761} w={173}>end of the</Note>
      <Note x={662} y={803} w={140} c={YEL}>DIODES</Note>
      <Note x={804} y={803}>.</Note>
      <Note x={663} y={887} w={612}>All DIODES are mounted UPRIGHT.</Note>
    </g>
    <path d="M1025 923 1568 1348" stroke={YEL} strokeWidth="7.500" strokeLinecap="round" />
  </g>
);

const layers = [
  ["TopLayer", "#ff0000"], ["BottomLayer", "#0000ff"], ["TopSilkLayer", "#ffcc00"], ["BottomSilkLayer", "#66cc33"],
  ["TopPasteMaskLayer", "#808080"], ["BottomPasteMaskLayer", "#800000"], ["TopSolderMaskLayer", "#800080"],
  ["BottomSolderMaskLayer", "#aa00ff"], ["Ratlines", "#6464ff"], ["BoardOutLine", "#ff00ff"], ["Multi-Layer", "#c0c0c0"],
];
const sections = [
  ["Canvas Attributes", [["Units", "mil", 1], ["Background", "#000000", 0, 1]]],
  ["Grid", [["Visible Grid", "Yes", 1], ["Grid Color", "#FFFFFF"], ["Grid Style", "line", 1], ["Snap", "Yes", 1], ["Grid Size", "100.000mil"], ["Snap Size", "5.000mil"], ["Alt Snap", "5.000mil"]]],
  ["Other", [["Routing Width", "10.000mil"], ["Routing Angle", "Line 45°", 1], ["Routing Conflict", "Block", 1], ["Remove Loop", "Yes", 1], ["Copper Zone", "Visible", 1]]],
];
const menus = ["File", "Edit", "Place", "Format", "View", "Design", "Route", "Tools", "Fabrication", "Advanced", "Setting", "Help"];
const mouse = [["Mouse-X", "2460.000mil"], ["Mouse-Y", "1635.000mil"], ["Mouse-DX", "4251.852mil"], ["Mouse-DY", "-570.371mil"]];

const HandleArrow = () => <svg width="6" height="10" viewBox="0 0 6 10"><path d="M0 0 6 5 0 10z" fill="#7a6b6b" /></svg>;

export default function App() {
  return (
    <App_>
      <Global />
      <TitleBar>
        <svg width="24" height="24" viewBox="0 0 24 24"><rect width="24" height="24" rx="3" fill="#5588ff" /><Cloud x={3} y={4} k={0.42} c="#fff" w={4.5} /></svg>
        <AppTitle>EasyEDA(Standard) - A Simple and Powerful Electronic Circuit Design Tool</AppTitle>
        <WindowButtons>
          <svg width="16" height="16"><path d="M0 8h15" stroke="#000" strokeWidth="1.200" /></svg>
          <svg width="16" height="16" fill="none" stroke="#000" strokeWidth="1.300"><path d="M1 4h11v11H1zM4 4V1h11v11h-3" /></svg>
          <svg width="16" height="16"><path d="m.5.5 15 15M15.500.5l-15 15" stroke="#000" strokeWidth="1.300" /></svg>
        </WindowButtons>
      </TitleBar>
      <MenuBar>
        <LogoSlot><Logo /></LogoSlot>
        {menus.map((m) => <MenuItem key={m}>{m}</MenuItem>)}
        <User>
          <svg width="40" height="40" viewBox="0 0 40 40">
            <circle cx="20" cy="20" r="19.500" fill="#f1f1f1" />
            <path d="M6 15c4-2 6-4 7-7C16 2 27 0 32 6c3 3 2 8 4 12 1 3 2 5 1 7l-5 2c0 5 2 7 1 9-5 4-12 4-15 1l-1-4-6 1c-2-1-1-4-2-6l-2-3 3-5-1-3-2-2zM7 28l4 1-1 4-3-1z" fill="#000" />
          </svg>
          <UserName>SherlockOhms2K</UserName>
          <svg width="12" height="6"><path d="M0 0h12L6 6z" fill="#444" /></svg>
        </User>
      </MenuBar>
      <ToolBar>
        {tools.map((t, i) => (t === 0 ? <ToolSep key={i} /> : <ToolCell key={i} $off={t[1]}>{t[0]}</ToolCell>))}
      </ToolBar>
      <Body>
        <SideNav>
          {nav.map((n) => (
            <NavItem key={n.l[0]} $active={n.active} $fs={n.fs}>
              <NavIcon>{n.i}</NavIcon>
              {n.l.map((t) => <div key={t}>{t}</div>)}
            </NavItem>
          ))}
          <NavItem $bottom>
            <NavIcon><SI><path d="M2 9.500h37M14.500 9V2.500h10V9M7 10l2 32h22l2.500-32M15 14l1.500 24M25.500 14l-1.500 24" /></SI></NavIcon>
            <div>Recycle</div><div>Bin</div>
          </NavItem>
        </SideNav>
        <Splitter><Handle><HandleArrow /></Handle></Splitter>
        <Editor>
          <TabStrip>
            <StartTab>Start</StartTab>
            <ActiveTab>
              <svg width="22" height="22" viewBox="0 0 22 22" fill="none" stroke="#4ccf4c" strokeWidth="1.700"><path d="M1 1h20v20H1zM1 9l6-6h14M1 14.500l7-6.500h13M1 19l6-5h3M15 14.500h6" /><circle cx="12.500" cy="14.500" r="2.300" /></svg>
              PCB_rACK_ARD...
            </ActiveTab>
          </TabStrip>
          <Stage>
            <svg width="3286" height="1917" viewBox="92 183 3286 1917">
              <rect x="92" y="183" width="3286" height="1917" fill="#000" />
              <Grid />
              <Board />
              <Notes />
              <Rulers />
            </svg>
          </Stage>
        </Editor>
        <Splitter $gap={3} $bg="#e0e0e0"><Handle><HandleArrow /></Handle></Splitter>
        <Props>
          <Selected><span>Selected Objects</span><span>0</span></Selected>
          {sections.map(([name, fields]) => (
            <React.Fragment key={name}>
              <Section>
                <svg width="13" height="12"><path d="M13 0v12H0z" fill="#ccc" /></svg>
                {name}
              </Section>
              {fields.map(([l, v, sel, dark]) => (
                <Field key={l}>
                  <FieldLabel>{l}</FieldLabel>
                  <Input $select={sel} $dark={dark}>{v}{sel ? <Arrow /> : null}</Input>
                </Field>
              ))}
            </React.Fragment>
          ))}
          <MouseTable>
            {mouse.map(([k, v]) => <MouseRow key={k}><MouseKey>{k}</MouseKey><MouseValue>{v}</MouseValue></MouseRow>)}
          </MouseTable>
        </Props>
        <Edge />
      </Body>

      <Floating $x={2564} $y={215.5} $w={815} $h={37.5}>
        <FloatHead>PCB Tools<HeadTools><MaxBox /></HeadTools></FloatHead>
      </Floating>
      <Floating $x={2693.7} $y={253} $w={555.5} $h={471} $bg="#fff">
        <FloatHead>
          Layers and Objects
          <HeadTools>
            <svg width="20" height="20" viewBox="0 0 20 20"><path d="M11 1.500q1-2 3 0l4 3.500q2 2 0 3-2 .5-4.500 3 0 4-1.500 5l-3.500-3-6.500 6.500 5-8L4 9q1-2 5-2 2-3 2-5.500z" fill="#5588ff" /></svg>
            <svg width="20" height="20" viewBox="0 0 20 20" fill="none" stroke="#666"><circle cx="10" cy="10" r="8.300" strokeWidth="2.400" strokeDasharray="3.600 2.900" /><circle cx="10" cy="10" r="7" strokeWidth="1.600" /><circle cx="10" cy="10" r="3" strokeWidth="1.700" /></svg>
            <svg width="17" height="20"><path d="M0 10h17" stroke="#666" strokeWidth="2" /></svg>
          </HeadTools>
        </FloatHead>
        <LayerTabs>
          <LayerTab $on>All</LayerTab><LayerTab>Copper</LayerTab><LayerTab>Non-Copper</LayerTab><LayerTab $last>Object</LayerTab>
        </LayerTabs>
        <LayerList>
          {layers.map(([n, c], i) => (
            <LayerRow key={n} $on={i === 0}>
              <Swatch $c={c}>{i === 0 && <Pencil />}</Swatch>
              <EyeBox><Eye /></EyeBox>
              <LayerName>{n}</LayerName>
            </LayerRow>
          ))}
        </LayerList>
        <Grip><svg width="20" height="20"><path d="M1 20 19 1M6 20 19 6.500M11 20l8-8M16 20l3-3" stroke="#777" strokeWidth="1.800" /></svg></Grip>
      </Floating>
      <Floating $x={44} $y={2032} $w={450} $h={38} $shadow>
        <FloatHead $pad={7.5}>Preview<HeadTools><MaxBox /></HeadTools></FloatHead>
      </Floating>
    </App_>
  );
}
